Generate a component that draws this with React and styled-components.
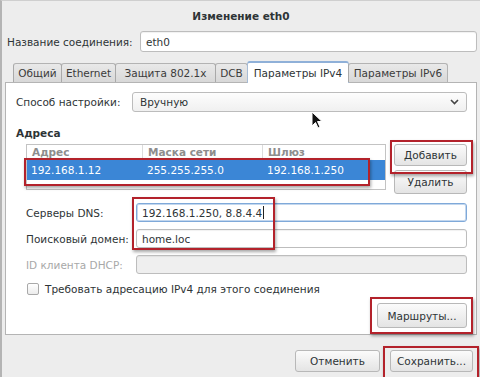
import React from "react"
import styled, { createGlobalStyle, css } from "styled-components"

const Global = createGlobalStyle`
  html, body {
    margin: 0;
    padding: 0;
    background: #ededed;
  }
  body {
    font-family: "DejaVu Sans", "Liberation Sans", sans-serif;
    font-size: 10.5px;
    color: #2e3436;
  }
`

const Window = styled.div`
  position: relative;
  width: 480px;
  height: 377px;
  box-sizing: border-box;
  border-left: 2px solid #b4b4b4;
  border-top: 1px solid #cfcfcf;
  background: #ededed;
  display: flex;
  flex-direction: column;
  overflow: hidden;
`

const Title = styled.div`
  height: 30px;
  display: flex;
  align-items: center;
  justify-content: center;
  font-weight: bold;
  color: #2e3436;
`

const Row = styled.div`
  display: flex;
  align-items: center;
  height: ${p => p.$h || 20}px;
  padding-left: ${p => p.$pl || 0}px;
  padding-right: ${p => p.$pr || 0}px;
`

const Label = styled.span`
  width: ${p => p.$w}px;
  flex: none;
  color: ${p => (p.$disabled ? "#a8a8a8" : "#2e3436")};
  white-space: nowrap;
`

const Input = styled.div`
  flex: 1;
  height: ${p => p.$h || 19}px;
  box-sizing: border-box;
  border: 1px solid ${p => (p.$focus ? "#7fa9d9" : "#bdbdbd")};
  border-radius: 3px;
  background: ${p => (p.$disabled ? "#efefef" : "#ffffff")};
  box-shadow: ${p => (p.$focus ? "0 0 0 1px #c3d7ee inset" : "inset 0 1px 1px rgba(0,0,0,0.06)")};
  display: flex;
  align-items: center;
  padding-left: 5px;
  white-space: nowrap;
  color: #2e3436;
`

const Caret = styled.span`
  display: inline-block;
  width: 1px;
  height: 13px;
  background: #222;
  margin-left: 1px;
`

const Tabs = styled.div`
  display: flex;
  align-items: flex-end;
  margin-top: 9px;
  padding-left: 11px;
  height: 21px;
  position: relative;
  z-index: 1;
`

const Tab = styled.div`
  width: ${p => p.$w}px;
  height: 19px;
  box-sizing: border-box;
  display: flex;
  align-items: center;
  justify-content: center;
  border: 1px solid #b3b3b3;
  border-bottom: none;
  border-left-color: #a9a9a9;
  border-radius: 3px 3px 0 0;
  background: linear-gradient(#e9e9e9, #d8d8d8);
  margin-right: -1px;
  white-space: nowrap;
  color: #3b3b3b;
  ${p =>
    p.$active &&
    css`
      background: #ffffff;
      border-color: #a7bcd6;
      border-top: 2px solid #8fb0d8;
      margin-bottom: -1px;
      height: 22px;
      color: #2e3436;
    `}
`

const Panel = styled.div`
  margin: 0 3px 0 3px;
  height: 253px;
  box-sizing: border-box;
  background: #ffffff;
  border: 1px solid #b4b4b4;
  padding: 9px 9px 0 10px;
  display: flex;
  flex-direction: column;
`

const Select = styled.div`
  flex: 1;
  height: 20px;
  box-sizing: border-box;
  border: 1px solid #bcbcbc;
  border-radius: 3px;
  background: linear-gradient(#fdfdfd, #f0f0f0);
  display: flex;
  align-items: center;
  justify-content: space-between;
  padding: 0 7px 0 7px;
`

const Section = styled.div`
  font-weight: bold;
  margin-top: 14px;
  height: 14px;
  line-height: 14px;
`

const AddrBlock = styled.div`
  display: flex;
  margin-top: 4px;
  padding-left: 10px;
`

const Table = styled.div`
  position: relative;
  width: 360px;
  height: 46px;
  box-sizing: border-box;
  border: 1px solid #c3c3c3;
  background: #fff;
`

const HeadRow = styled.div`
  display: grid;
  grid-template-columns: 116px 120px 1fr;
  height: 15px;
`

const HeadCell = styled.div`
  padding-left: 5px;
  color: #8d8d8d;
  font-weight: bold;
  line-height: 14px;
  border-right: ${p => (p.$last ? "none" : "1px solid #dcdcdc")};
`

const DataRow = styled.div`
  display: grid;
  grid-template-columns: 116px 120px 1fr;
  height: 20px;
  background: #3b86d6;
  color: #ffffff;
  align-items: center;
`

const DataCell = styled.div`
  padding-left: 4px;
`

const Buttons = styled.div`
  display: flex;
  flex-direction: column;
  gap: 4px;
  margin-left: 8px;
`

const Button = styled.div`
  width: ${p => p.$w}px;
  height: ${p => p.$h || 22}px;
  box-sizing: border-box;
  border: 1px solid #b8b8b8;
  border-radius: 3px;
  background: linear-gradient(#fbfbfb, #e4e4e4);
  display: flex;
  align-items: center;
  justify-content: center;
  color: #2e3436;
  white-space: nowrap;
`

const Mark = styled.div`
  position: absolute;
  left: ${p => p.$x}px;
  top: ${p => p.$y}px;
  width: ${p => p.$w}px;
  height: ${p => p.$h}px;
  border: 2px solid #b3222b;
  box-shadow: 1px 2px 3px rgba(0, 0, 0, 0.35);
  box-sizing: border-box;
  pointer-events: none;
`

const Fields = styled.div`
  padding-left: 10px;
  margin-top: 9px;
  display: flex;
  flex-direction: column;
  gap: 7px;
`

const Check = styled.div`
  display: flex;
  align-items: center;
  gap: 6px;
  margin-top: 9px;
  padding-left: 11px;
`

const Box = styled.span`
  width: 10px;
  height: 10px;
  border: 1px solid #a9a9a9;
  border-radius: 2px;
  background: linear-gradient(#fff, #ececec);
`

const RightRow = styled.div`
  display: flex;
  justify-content: flex-end;
  margin-top: ${p => p.$mt}px;
  gap: 10px;
  padding-right: ${p => p.$pr || 0}px;
`

const Cursor = styled.svg`
  position: absolute;
  left: 309px;
  top: 110px;
`

export default function App() {
  return (
    <Window>
      <Global />
      <Title>Изменение eth0</Title>
      <Row $h={21} $pl={5} $pr={3}>
        <Label $w={133}>Название соединения:</Label>
        <Input $h={21}>eth0</Input>
      </Row>
      <Tabs>
        <Tab $w={49}>Общий</Tab>
        <Tab $w={55}>Ethernet</Tab>
        <Tab $w={101}>Защита 802.1x</Tab>
        <Tab $w={33}>DCB</Tab>
        <Tab $w={102} $active>Параметры IPv4</Tab>
        <Tab $w={100}>Параметры IPv6</Tab>
      </Tabs>
      <Panel>
        <Row $h={20}>
          <Label $w={116}>Способ настройки:</Label>
          <Select>
            <span>Вручную</span>
            <svg width="9" height="6" viewBox="0 0 9 6">
              <path d="M1 1l3.5 3.5L8 1" fill="none" stroke="#444" strokeWidth="1.6" />
            </svg>
          </Select>
        </Row>
        <Section>Адреса</Section>
        <AddrBlock>
          <Table>
            <HeadRow>
              <HeadCell>Адрес</HeadCell>
              <HeadCell>Маска сети</HeadCell>
              <HeadCell $last>Шлюз</HeadCell>
            </HeadRow>
            <DataRow>
              <DataCell>192.168.1.12</DataCell>
              <DataCell>255.255.255.0</DataCell>
              <DataCell>192.168.1.250</DataCell>
            </DataRow>
          </Table>
          <Buttons>
            <Button $w={73}>Добавить</Button>
            <Button $w={73} $h={24}>Удалить</Button>
          </Buttons>
        </AddrBlock>
        <Fields>
          <Row $h={19}>
            <Label $w={110}>Серверы DNS:</Label>
            <Input $focus>
              192.168.1.250, 8.8.4.4<Caret />
            </Input>
          </Row>
          <Row $h={19}>
            <Label $w={110}>Поисковый домен:</Label>
            <Input>home.loc</Input>
          </Row>
          <Row $h={19}>
            <Label $w={110} $disabled>ID клиента DHCP:</Label>
            <Input $disabled />
          </Row>
        </Fields>
        <Check>
          <Box />
          <span>Требовать адресацию IPv4 для этого соединения</span>
        </Check>
        <RightRow $mt={8}>
          <Button $w={90} $h={25}>Маршруты...</Button>
        </RightRow>
      </Panel>
      <RightRow $mt={15} $pr={7}>
        <Button $w={85}>Отменить</Button>
        <Button $w={83}>Сохранить...</Button>
      </RightRow>

      <Mark $x={22} $y={157} $w={346} $h={28} />
      <Mark $x={388} $y={139} $w={83} $h={34} />
      <Mark $x={130} $y={196} $w={143} $h={53} />
      <Mark $x={368} $y={296} $w={103} $h={37} />
      <Mark $x={381} $y={345} $w={96} $h={34} />
      <Cursor width="12" height="18" viewBox="0 0 12 18">
        <path d="M1 1v14l3.5-3.5 2.5 5.5 2-1-2.5-5.5H11z" fill="#111" stroke="#fff" strokeWidth="1" />
      </Cursor>
    </Window>
  )
}
